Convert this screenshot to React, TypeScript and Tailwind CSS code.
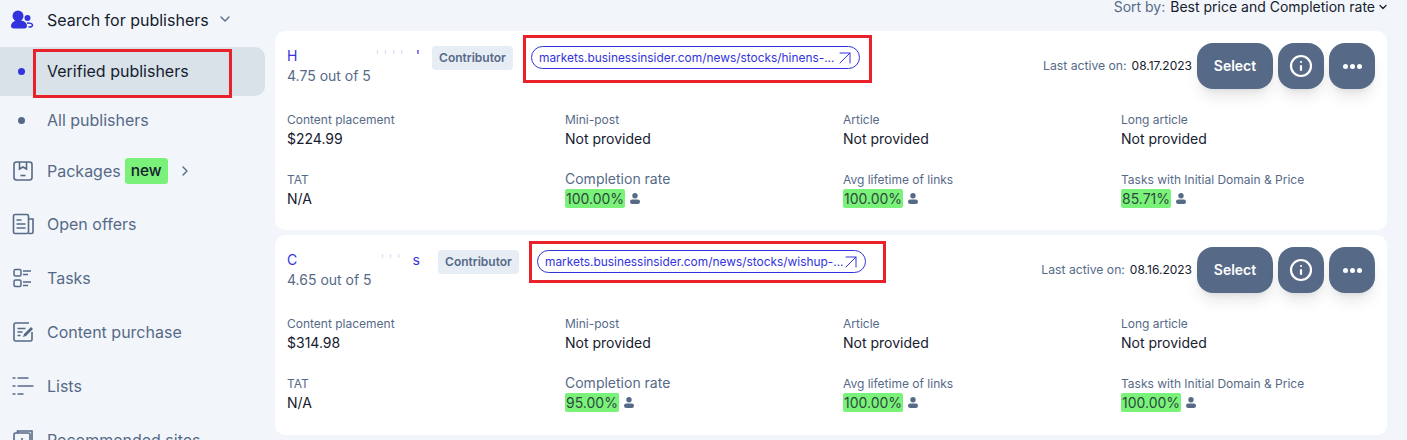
import React from 'react';
import { ChevronDown, ChevronRight, ArrowUpRight, Info } from 'lucide-react';

const icons: Record<string, React.ReactNode> = {
  packages: (
    <svg width="22" height="22" viewBox="0 0 22 22" fill="none" stroke="#566a88" strokeWidth="1.6">
      <rect x="2" y="2" width="18" height="18" rx="2.5" />
      <path d="M7.5 2v7l3.5-2 3.5 2V2" />
      <path d="M8.5 15.5h5" />
    </svg>
  ),
  offers: (
    <svg width="22" height="22" viewBox="0 0 22 22" fill="none" stroke="#566a88" strokeWidth="1.6">
      <path d="M16.5 6H21v13a1.5 1.5 0 0 1-1.5 1.5H16.5" />
      <rect x="1.5" y="1.5" width="15" height="19" rx="1.5" />
      <path d="M4.5 7h5M4.5 11h9M4.5 15h9" />
    </svg>
  ),
  tasks: (
    <svg width="22" height="22" viewBox="0 0 22 22" fill="none" stroke="#566a88" strokeWidth="1.5">
      <rect x="2" y="2.5" width="7" height="6.5" rx="1.5" />
      <rect x="2" y="13" width="7" height="6.5" rx="1.5" />
      <path d="M11 4h8M11 7.5h5M11 15h8M11 18.5h5" />
    </svg>
  ),
  content: (
    <svg width="22" height="22" viewBox="0 0 22 22" fill="none" stroke="#566a88" strokeWidth="1.6">
      <path d="M17 2H3.5A1.5 1.5 0 0 0 2 3.5v15A1.5 1.5 0 0 0 3.5 20h15a1.5 1.5 0 0 0 1.5-1.5V11" />
      <path d="M5.5 7.5h8M5.5 11h5M5.5 14.5h3" />
      <path d="M11 16l1-3 7-7 2 2-7 7z" fill="#566a88" stroke="none" />
    </svg>
  ),
  lists: (
    <svg width="22" height="22" viewBox="0 0 22 22" fill="none" stroke="#566a88" strokeWidth="1.6">
      <path d="M0.5 3h3M5.5 3h11M0.5 11h3M5.5 11h16M0.5 19h3M5.5 19h6" />
    </svg>
  ),
  recommended: (
    <svg width="22" height="22" viewBox="0 0 22 22" fill="none" stroke="#566a88" strokeWidth="1.6">
      <path d="M5.5 4V2H20v15h-2" />
      <rect x="2" y="4" width="16" height="16" rx="1.5" />
      <path d="M10 9v6M7 12h6" />
    </svg>
  ),
};

const Person = () => (
  <svg width="10" height="11" viewBox="0 0 10 11" fill="#566a88">
    <circle cx="5" cy="2.7" r="2.7" />
    <rect x="0" y="6.6" width="10" height="4.4" rx="2.2" />
  </svg>
);

const Metric = ({ label, value }: { label: string; value: string }) => (
  <div className="flex h-[39px] flex-col justify-between pt-[1px]">
    <div className="text-[12px] leading-[18px] text-[#566a88]">{label}</div>
    <div className="text-[14px] leading-[20px] text-[#16202e]">{value}</div>
  </div>
);

const Rate = ({ label, value, big }: { label: string; value: string; big?: boolean }) => (
  <div className={`flex h-[38px] flex-col justify-between ${big ? '' : 'pt-[1px]'}`}>
    <div className={`leading-[18px] text-[#566a88] ${big ? 'text-[14px]' : 'text-[12px]'}`}>{label}</div>
    <div className="flex items-center gap-[5px]">
      <span className="rounded-[2px] bg-[#7af27a] px-[1px] text-[14px] leading-[19px] text-[#2c4a3a]">{value}</span>
      <Person />
    </div>
  </div>
);

type Pub = {
  nameStart: string;
  nameFaint: string;
  nameEnd: string;
  rating: string;
  link: string;
  date: string;
  price: string;
  rates: string[];
  nameW: string;
  h: string;
};

const Card = ({ p }: { p: Pub }) => (
  <div className={`rounded-[10px] bg-white px-[12px] pt-[12px] ${p.h}`}>
    <div className="flex h-[46px] items-start">
      <div className={`pt-[3px] ${p.nameW}`}>
        <div className="flex h-[20px] w-[133px] justify-between text-[14px] leading-[20px] text-[#3333dd]">
          <span>{p.nameStart}</span>
          <span className="ml-auto mr-[12px] text-[#3333dd]/20">{p.nameFaint}</span>
          <span>{p.nameEnd}</span>
        </div>
        <div className="text-[14px] leading-[20px] text-[#566a88]">{p.rating}</div>
      </div>
      <div className="mt-[3px] flex h-[24px] w-[81px] items-center justify-center rounded-[4px] bg-[#e6edf4] text-[12px] font-semibold text-[#566a88]">
        Contributor
      </div>
      <div className="ml-[18px] mt-[3px] flex h-[23px] w-[329px] items-center justify-between rounded-full border border-[#3333dd] pl-[7px] pr-[2px] text-[11.9px] text-[#3333dd]">
        {p.link}
        <ArrowUpRight size={24} strokeWidth={1} className="-my-[4px] -ml-[8px] shrink-0" />
      </div>
      <div className="ml-auto flex items-center">
        <span className="mr-[5px] text-[12.2px] text-[#566a88]">Last active on:</span>
        <span className="mr-[5px] text-[12px] text-[#16202e]">{p.date}</span>
        <button className="h-[46px] w-[76px] rounded-[16px] bg-[#566a88] pb-[1px] text-[14px] font-semibold text-white shadow-lg">
          Select
        </button>
        <button className="ml-[5px] flex h-[46px] w-[46px] items-center justify-center rounded-[16px] bg-[#566a88] text-white shadow-lg">
          <Info size={24} strokeWidth={2.2} />
        </button>
        <button className="ml-[5px] flex h-[46px] w-[46px] items-center justify-center gap-[2px] rounded-[16px] bg-[#566a88] shadow-lg">
          <span className="h-[5px] w-[5px] rounded-full bg-white" />
          <span className="h-[5px] w-[5px] rounded-full bg-white" />
          <span className="h-[5px] w-[5px] rounded-full bg-white" />
        </button>
      </div>
    </div>
    <div className="mt-[21px] grid grid-cols-[278px_278px_278px_1fr] gap-y-[21px]">
      <Metric label="Content placement" value={p.price} />
      <Metric label="Mini-post" value="Not provided" />
      <Metric label="Article" value="Not provided" />
      <Metric label="Long article" value="Not provided" />
      <Metric label="TAT" value="N/A" />
      <Rate label="Completion rate" value={p.rates[0]} big />
      <Rate label="Avg lifetime of links" value={p.rates[1]} />
      <Rate label="Tasks with Initial Domain & Price" value={p.rates[2]} />
    </div>
  </div>
);

const pubs: Pub[] = [
  {
    nameStart: 'H',
    nameFaint: "' ' ' '",
    nameEnd: "'",
    rating: '4.75 out of 5',
    link: 'markets.businessinsider.com/news/stocks/hinens-...',
    date: '08.17.2023',
    price: '$224.99',
    rates: ['100.00%', '100.00%', '85.71%'],
    nameW: 'w-[145px]',
    h: 'h-[199px]',
  },
  {
    nameStart: 'C',
    nameFaint: "'    '    '",
    nameEnd: 's',
    rating: '4.65 out of 5',
    link: 'markets.businessinsider.com/news/stocks/wishup-...',
    date: '08.16.2023',
    price: '$314.98',
    rates: ['95.00%', '100.00%', '100.00%'],
    nameW: 'w-[151px]',
    h: 'h-[200px]',
  },
];

export default function App() {
  return (
    <div
      className="relative flex h-[440px] w-[1407px] overflow-hidden bg-[#f2f6fa]"
      style={{ fontFamily: 'Inter, sans-serif' }}
    >
      <aside className="w-[265px] shrink-0 text-[16px] text-[#566a88]">
        <div className="flex h-[47px] items-start pl-[11px] pt-[9px]">
          <svg width="23" height="19" viewBox="0 0 23 19" fill="#3333dd" className="mt-[1px]">
            <circle cx="7" cy="6" r="5.5" />
            <path d="M0 16c0-3.5 3-5.5 8-5.5s8 2 8 5.5c0 1.5-1 2.5-2.5 2.5h-11C1 18.500 0 17.500 0 16z" />
            <circle cx="16.500" cy="8" r="3" />
            <path d="M16 13c3 0 5.500.3 5.500 2.200 0 1.400-2 1.800-4 1.800" fill="none" stroke="#3333dd" strokeWidth="1.5" />
          </svg>
          <span className="ml-[13px] leading-[22px] text-[#16202e]">Search for publishers</span>
          <ChevronDown size={16} className="ml-[8px] mt-[2px] text-[#566a88]" />
        </div>
        <div className="flex h-[49px] items-center rounded-r-[10px] bg-[#d9e2e9] pb-[1px] pl-[18px] text-[#16202e]">
          <span className="h-[7px] w-[7px] rounded-full bg-[#3333dd]" />
          <span className="ml-[22px]">Verified publishers</span>
        </div>
        <div className="flex h-[49px] items-center pb-[1px] pl-[18px]">
          <span className="h-[7px] w-[7px] rounded-full bg-[#566a88]" />
          <span className="ml-[22px]">All publishers</span>
        </div>
        <div className="flex h-[52px] items-center pl-[12px]">
          {icons.packages}
          <span className="ml-[13px]">Packages</span>
          <span className="ml-[4px] rounded-[3px] bg-[#7af27a] px-[6px] text-[15.5px] font-medium leading-[26px] text-[#16202e]">
            new
          </span>
          <ChevronRight size={16} className="ml-[9px]" />
        </div>
        {[
          ['offers', 'Open offers'],
          ['tasks', 'Tasks'],
          ['content', 'Content purchase'],
          ['lists', 'Lists'],
          ['recommended', 'Recommended sites'],
        ].map(([k, t]) => (
          <div key={k} className="flex h-[54px] shrink-0 items-center pl-[12px]">
            {icons[k]}
            <span className="ml-[13px]">{t}</span>
          </div>
        ))}
      </aside>
      <main className="ml-[10px] w-[1112px]">
        <div className="flex h-[31px] items-start justify-end text-[14px] leading-[14px]">
          <span className="text-[#566a88]">Sort by:</span>
          <span className="ml-[5px] text-[#16202e]">Best price and Completion rate</span>
          <ChevronDown size={12} strokeWidth={2.5} className="ml-[2px] mr-[-2px] mt-[1px] text-[#16202e]" />
        </div>
        <div className="flex flex-col gap-[5px]">
          {pubs.map((p) => (
            <Card key={p.rating} p={p} />
          ))}
        </div>
      </main>
      <div className="absolute left-[33px] top-[49px] h-[49px] w-[199px] border-[3px] border-[#e8212b]" />
      <div className="absolute left-[523px] top-[35px] h-[48px] w-[349px] border-[3px] border-[#e8212b]" />
      <div className="absolute left-[529px] top-[241px] h-[42px] w-[357px] border-[3px] border-[#e8212b]" />
    </div>
  );
}
